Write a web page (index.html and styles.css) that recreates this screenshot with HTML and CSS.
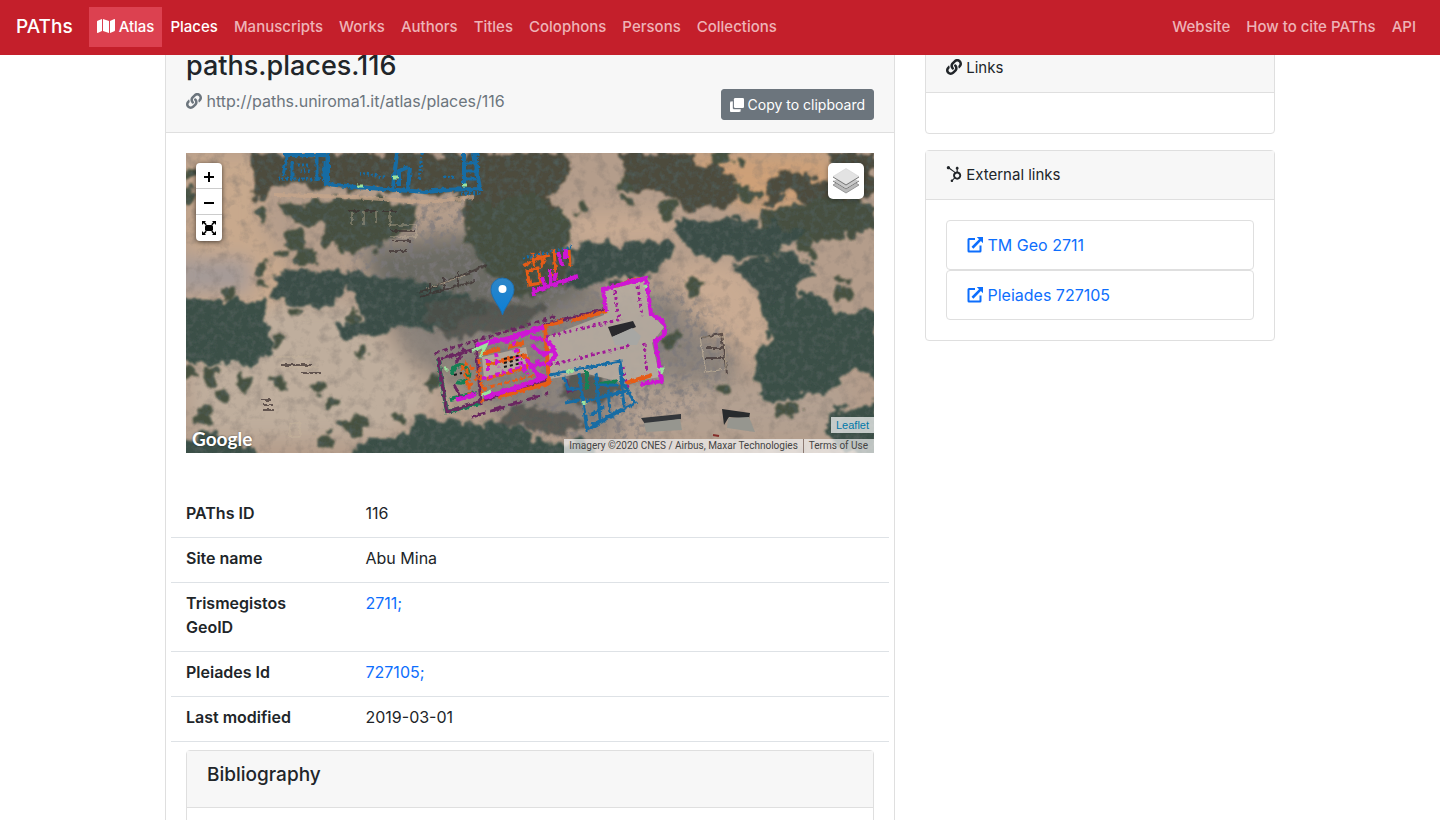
FILE: index.html
```html
<!DOCTYPE html>
<html lang="en">
<head>
<meta charset="utf-8">
<meta name="viewport" content="width=device-width, initial-scale=1">
<title>paths.places.116</title>
<link rel="stylesheet" href="styles.css">
</head>
<body>
<svg class="sprite" aria-hidden="true">
  <symbol id="i-link" viewBox="0 0 512 512"><path d="M326.612 185.391c59.747 59.809 58.927 155.698.36 214.59-.11.12-.24.25-.36.37l-67.2 67.2c-59.27 59.27-155.699 59.262-214.96 0-59.27-59.26-59.27-155.7 0-214.96l37.106-37.106c9.84-9.84 26.786-3.3 27.294 10.606.648 17.722 3.826 35.527 9.69 52.721 1.986 5.822.567 12.262-3.783 16.612l-13.087 13.087c-28.026 28.026-28.905 73.66-1.155 101.96 28.024 28.579 74.086 28.749 102.325.51l67.2-67.19c28.191-28.191 28.073-73.757 0-101.83-3.701-3.694-7.429-6.564-10.341-8.569a16.037 16.037 0 0 1-6.947-12.606c-.396-10.567 3.348-21.456 11.698-29.806l21.054-21.055c5.521-5.521 14.182-6.199 20.584-1.731a152.482 152.482 0 0 1 20.522 17.197zM467.547 44.449c-59.261-59.262-155.69-59.27-214.96 0l-67.2 67.2c-.12.12-.25.25-.36.37-58.566 58.892-59.387 154.781.36 214.59a152.454 152.454 0 0 0 20.521 17.196c6.402 4.468 15.064 3.789 20.584-1.731l21.054-21.055c8.35-8.35 12.094-19.239 11.698-29.806a16.037 16.037 0 0 0-6.947-12.606c-2.912-2.005-6.64-4.875-10.341-8.569-28.073-28.073-28.191-73.639 0-101.83l67.2-67.19c28.239-28.239 74.3-28.069 102.325.51 27.75 28.3 26.872 73.934-1.155 101.96l-13.087 13.087c-4.35 4.35-5.769 10.79-3.783 16.612 5.864 17.194 9.042 34.999 9.69 52.721.509 13.906 17.454 20.446 27.294 10.606l37.106-37.106c59.271-59.259 59.271-155.699.001-214.959z"/></symbol>
  <symbol id="i-map" viewBox="0 0 576 512"><path d="M0 117.66v346.32c0 11.32 11.43 19.06 21.94 14.86L160 416V32L20.12 87.95A32.006 32.006 0 0 0 0 117.66zM192 416l192 64V96L192 32v384zM554.06 33.16L416 96v384l139.88-55.95A31.996 31.996 0 0 0 576 394.34V48.02c0-11.32-11.43-19.06-21.94-14.86z"/></symbol>
  <symbol id="i-clone" viewBox="0 0 512 512"><path opacity=".55" d="M48 108h60v260q0 36 36 36h260v60q0 48-48 48H48q-48 0-48-48V156q0-48 48-48z"/><path d="M48 144h48v224q0 48 48 48h224v48q0 48-48 48H48q-48 0-48-48V192q0-48 48-48z"/><rect x="144" width="368" height="368" rx="48"/></symbol>
  <symbol id="i-hub" viewBox="0 0 512 512"><path d="M267.4 211.6c-25.1 23.7-40.8 57.3-40.8 94.6 0 29.3 9.7 56.3 26 78L203.1 434c-4.4-1.6-9.1-2.5-14-2.5-10.8 0-20.9 4.2-28.5 11.8-7.6 7.6-11.8 17.8-11.8 28.6s4.2 20.9 11.8 28.5c7.6 7.6 17.8 11.6 28.5 11.6 10.8 0 20.9-3.9 28.6-11.6 7.6-7.6 11.8-17.8 11.8-28.5 0-4.2-.6-8.2-1.9-12.1l50-50.2c22 16.9 49.4 26.9 79.3 26.9 71.9 0 130-58.3 130-130.2 0-65.2-47.7-119.2-110.2-128.7V116c17.5-7.4 28.2-23.8 28.2-42.9 0-26.1-20.9-47.9-47-47.9S311.2 47 311.2 73.1c0 19.1 10.7 35.5 28.2 42.900v61.200c-15.200 2.100-29.600 6.700-42.700 13.600-27.600-20.900-117.500-85.700-168.900-124.800 1.200-4.400 2-9 2-13.800C129.800 23.400 106.300 0 77.400 0 48.600 0 25.200 23.400 25.200 52.200c0 28.900 23.400 52.300 52.200 52.300 9.800 0 18.900-2.900 26.800-7.600l163.200 114.700zm89.500 163.600c-38.100 0-69-30.900-69-69s30.900-69 69-69 69 30.900 69 69-30.900 69-69 69z"/></symbol>
  <symbol id="i-ext" viewBox="0 0 16 16"><path d="M8 1.100v2H2.500v10.400h10V8.500h2V14q0 1.500-1.500 1.500H2Q.5 15.500.5 14V2.600q0-1.500 1.500-1.500zM9.800 0H16v6.200l-2.100-2.100-7.500 7.600-1.900-1.900 7.500-7.500z"/></symbol>
</svg>

<header class="navbar">
  <a class="brand" href="#">PAThs</a>
  <nav class="nav nav-main" aria-label="Main">
    <a class="nav-link atlas" href="#"><svg class="icon icon-map" aria-hidden="true"><use href="#i-map"/></svg> Atlas</a>
    <a class="nav-link active" href="#">Places</a>
    <a class="nav-link" href="#">Manuscripts</a>
    <a class="nav-link" href="#">Works</a>
    <a class="nav-link" href="#">Authors</a>
    <a class="nav-link" href="#">Titles</a>
    <a class="nav-link" href="#">Colophons</a>
    <a class="nav-link" href="#">Persons</a>
    <a class="nav-link" href="#">Collections</a>
  </nav>
  <nav class="nav" aria-label="About">
    <a class="nav-link" href="#">Website</a>
    <a class="nav-link" href="#">How to cite PAThs</a>
    <a class="nav-link" href="#">API</a>
  </nav>
</header>

<main class="container">
  <article class="col-main">
    <section class="card">
      <div class="card-header">
        <h1 class="title">paths.places.116</h1>
        <div class="uri-row">
          <span class="uri"><svg class="icon" aria-hidden="true"><use href="#i-link"/></svg> http://paths.uniroma1.it/atlas/places/116</span>
          <button class="copy" type="button"><svg class="icon icon-clone" aria-hidden="true"><use href="#i-clone"/></svg> Copy to clipboard</button>
        </div>
      </div>
      <div class="card-body">
        <div class="map">
          <svg class="imagery" viewBox="0 0 688 300" preserveAspectRatio="xMidYMid slice" role="img" aria-label="Satellite view of Abu Mina">
            <defs>
              <filter id="rough" x="-5%" y="-5%" width="110%" height="110%">
                <feTurbulence type="fractalNoise" baseFrequency=".07" numOctaves="3" seed="4" result="n"/>
                <feDisplacementMap in="SourceGraphic" in2="n" scale="22" xChannelSelector="R" yChannelSelector="G"/>
                <feGaussianBlur stdDeviation=".8" result="shape"/>
                <feTurbulence type="fractalNoise" baseFrequency=".16" numOctaves="3" seed="12"/>
                <feColorMatrix values="0 0 0 0 .08  0 0 0 0 .11  0 0 0 0 .1  2 0 0 0 -.85"/>
                <feComposite in2="shape" operator="in" result="dark"/>
                <feMerge><feMergeNode in="shape"/><feMergeNode in="dark"/></feMerge>
              </filter>
              <filter id="jag" x="-5%" y="-5%" width="110%" height="110%"><feTurbulence type="fractalNoise" baseFrequency=".25" numOctaves="2" seed="9" result="n"/><feDisplacementMap in="SourceGraphic" in2="n" scale="4" xChannelSelector="R" yChannelSelector="G"/></filter>
              <filter id="haze" x="-20%" y="-20%" width="140%" height="140%"><feGaussianBlur stdDeviation="10"/></filter>
              <filter id="grain" x="0" y="0" width="100%" height="100%"><feTurbulence type="fractalNoise" baseFrequency=".09" numOctaves="5" seed="12"/><feColorMatrix values="0 0 0 0 .2  0 0 0 0 .17  0 0 0 0 .15  1.600 0 0 0 -.75"/></filter>
              <filter id="rubble" x="-5%" y="-5%" width="110%" height="110%"><feTurbulence type="fractalNoise" baseFrequency=".14" numOctaves="4" seed="22"/><feColorMatrix values="0 0 0 0 .2  0 0 0 0 .19  0 0 0 0 .2  4 0 0 0 -1.900" result="r"/><feGaussianBlur in="SourceGraphic" stdDeviation="9" result="m"/><feComposite in="r" in2="m" operator="in"/></filter>
              <linearGradient id="pin" x1="0" y1="0" x2="0" y2="1"><stop offset="0" stop-color="#2e86c8"/><stop offset="1" stop-color="#0a7fd6"/></linearGradient>
            </defs>
            <rect width="688" height="300" fill="#b49d8b"/>
            <g filter="url(#haze)">
              <path fill="#c8a98d" d="M0 0h75v75l40 55-30 30H0z"/>
              <path fill="#cda078" d="M485 0h165v60H560l-40-30z"/>
              <path fill="#a39a98" d="M-10 105h75v35h-75z"/>
              <path fill="#8b837c" d="M170 85l160-10 100 70 110-10 10 90-130 60-100-20-100-60z"/>
              <path fill="#6b6b64" d="M180 100l130-20 100 50-60 40-150-10z"/>
              <path fill="#bfae9d" d="M85 150h80l90 100-60 35H10l-10-60z"/>
              <path fill="#c9ab93" d="M380 60h110v30H385zM480 110h70l45 55-20 50-70-50z"/>
              <path fill="#b3a091" d="M430 230h240l-20 55H430z"/>
            </g>
            <rect width="688" height="300" filter="url(#grain)" opacity=".6"/>
            <g filter="url(#rubble)" opacity=".7"><path d="M170 60l120-20 30 60 90 30 90 0 50 60-20 50-90 60-110-20-70-100-90-50z"/></g>
            <g filter="url(#rough)">
              <path fill="#4d4c3c" d="M66 0h315l3 25-20 22 20 14v25l-50 20-45-12-12-40 8-12-100-5-90-6-20 14-10-5zM435 0h75l2 14 20-6 22 22-3 20-55 8-18-18-40-8zM640 0h48v40l-55 12-30-12-20 14-2-32 25-6 20 12 20 2 5-12z"/>
              <path fill="#47503f" d="M95 52l65-8 68 5 7 18-30 14-14 14-22 4-32-10-2-16-30-4zM285 54l60-14 40 30-5 60-50 16-30-30-18-30zM575 60l55-14 58 2v32l-45 8-40-4-20 24z"/>
              <path fill="#3b4e46" d="M490 66l90 4 38 12-20 16-28 8-60-2-14-18zM552 112l50-14 34 22-28 10-4 24-26-4-12-22zM385 92l98-2 6 15-28 18-80 14zM82 145l12-30 30 6 40-6-4 24-26 16zM158 120l60 5 70 20 20 12-50 20-50-5-52 15-8-12 30-10z"/>
              <path fill="#3a5046" d="M-5 148h80l13 55-30 10-50-2-15-8zM575 150l50-10 35 22 33-4v68l-24-10-30 22-50 12-18-8-2-40 18-14zM160 305l25-20 18 4 30-22 90 4 40 20 35-5 10 20zM638 262l55-14v57l-42-10zM-5 288l30-8 20 8 25 12v5H-5z"/>
              <path fill="#50504a" opacity=".8" d="M240 150l40-5 80 10-20 20-70 10-30-15zM385 215l50 20-20 15-40-5zM330 250l70 20-30 10-60-10z"/>
              <g fill="#47513f">
                <circle cx="73" cy="62" r="6"/><circle cx="78" cy="115" r="6"/><circle cx="44" cy="141" r="6"/><circle cx="74" cy="132" r="4"/><circle cx="110" cy="87" r="11"/><circle cx="120" cy="104" r="10"/><circle cx="155" cy="98" r="5"/><circle cx="98" cy="101" r="5"/><circle cx="177" cy="202" r="7"/><circle cx="166" cy="162" r="7"/><circle cx="109" cy="158" r="5"/><circle cx="92" cy="188" r="6"/><circle cx="58" cy="230" r="9"/><circle cx="26" cy="222" r="8"/><circle cx="36" cy="243" r="7"/><circle cx="19" cy="262" r="9"/><circle cx="3" cy="219" r="6"/><circle cx="93" cy="229" r="6"/><circle cx="134" cy="234" r="6"/><circle cx="145" cy="251" r="7"/><circle cx="160" cy="271" r="8"/><circle cx="170" cy="272" r="11"/><circle cx="138" cy="289" r="8"/><circle cx="210" cy="265" r="5"/><circle cx="248" cy="229" r="7"/><circle cx="440" cy="34" r="6"/><circle cx="396" cy="54" r="8"/><circle cx="377" cy="64" r="7"/><circle cx="439" cy="50" r="6"/><circle cx="480" cy="55" r="8"/><circle cx="556" cy="11" r="5"/><circle cx="560" cy="41" r="8"/><circle cx="572" cy="39" r="5"/><circle cx="537" cy="3" r="9"/><circle cx="619" cy="91" r="8"/><circle cx="625" cy="102" r="6"/><circle cx="655" cy="126" r="5"/><circle cx="657" cy="141" r="6"/><circle cx="507" cy="133" r="8"/><circle cx="604" cy="258" r="9"/><circle cx="486" cy="188" r="8"/><circle cx="535" cy="237" r="6"/><circle cx="5" cy="22" r="6"/><circle cx="2" cy="45" r="6"/>
              </g>
            </g>
            <g filter="url(#jag)" fill="none">
              <path stroke="#c9a78a" stroke-width="4" opacity=".7" d="M88 42l80 2 70 5 50-5"/>
              <g stroke="#3b312e" stroke-width="2" opacity=".7"><path d="M162 58h12m4 0h12m6 0h14M205 78h24m-24 10h20m-22 10h18M232 140l45-18 24-10M234 144l55-16M244 130v12m14-18v14m14-20v14M515 185l20-4 6 40M520 195h18m-18 10h18M95 212h30m-10 8h20M76 247h10m-9 5h10m-10 5h10"/></g>
              <path stroke="#c8b69d" opacity=".7" d="M204 72h26v12h-26M514 184h24l2 32-20 3zM166 60v12m12-14v14m12-14v12m14-12v14M240 136l40-14M90 204h35m-30 10h38M104 270h10v14h-10z"/>
            </g>
            <path fill="#b9aea2" opacity=".85" d="M361 184l57-22 1-26 40-10 5 34 14 14-12 16 8 34-36 6-40-10-34 6zM296 204l44-10 4 20-46 12z"/>
            <path fill="#29292d" d="M422 174l25-6 3 6-24 10z"/><path fill="#a7a7a4" d="M426 184l20-9 9 8-4 9h-22z"/>
            <path fill="#33363a" d="M455 265l40-4v5l-36 5z"/><path fill="#282b2d" d="M536 256l28 4-1 6-20-2-5 8z"/><path fill="#96968f" d="M458 270l36-4 2 11-36 2zM542 265l21-1 6 15-28-4z"/><path stroke="#842d2a" stroke-width="2" d="M527 282l6 1"/>
            <g filter="url(#jag)" fill="none">
              <g stroke="#158054" stroke-width="4"><path d="M252 206l9 53 33-9M264 246l26-6M266 222q0-9 8-10 10 2 8 12-4 8-12 5"/><path d="M401 218v18m8-4 23-4"/></g>
              <g stroke="#6b2861" stroke-width="3"><path stroke-dasharray="5 3" d="M249 200l122-37"/><path d="M252 205l9 54 101-32M290 190l5 62M255 206l34-10M268 232l8 14M278 196l-8 14M380 226l2 12 10-2M357 172l64-16"/><path stroke-dasharray="14 5" d="M286 264l77-24"/></g>
              <g stroke="#e65b17" stroke-width="4">
                <path stroke-width="3" d="M341 118l3 14 11-2-3-15zM337 113l8-4m1-9 2 10 6-9 2 10 6-12M350 106l14-4M368 96l2 28-5-4M383 97l1 16"/>
                <path d="M357 174l20-6m8 0 36-10M429 133l25-7M359 172l4 58-50 14M294 201l20-5m8-2 16-4M300 212l38-10q8 4 3 12l-40 12M440 230l26-8"/>
                <path stroke-width="3" stroke-dasharray="5 3" d="M276 212l6 22 12-12-14-12 4 32M293 206l4 44M296 236l60-16M330 196l18 20"/>
              </g>
              <g stroke="#ce14d4" stroke-width="4">
                <path d="M346 139l46-16M359 134l-3-10m12 4 2-9M372 99l4 13M380 96v10m-16 10v18M347 135l1 8"/>
                <path stroke-width="5" d="M290 193l22-6 6 0 40-13M298 244l28-8 34-12"/>
                <path d="M338 180l20-5M344 184l14 3M346 192l12 10 10-6-8-10M342 214l18-4M348 220l12 4M366 196l4 6-8 10M340 206l14 18M270 247l20-6"/>
                <path stroke-dasharray="4 3" d="M326 182l6 24 10 16M334 180l-14 10M302 206v12m8-18 3 14M296 226l60-18"/>
                <path d="M420 158l-3-22 43-11 5 36c16 6 20 20 4 27l7 40-22 3"/>
              </g>
              <g stroke="#a01f97" stroke-width="3" stroke-dasharray="3 3"><path d="M360 184l76-18M364 212l80-19M429 138l4 30M452 133l4 30M458 190l3 30M437 214l4 20"/></g>
              <g stroke="#176ca4" stroke-width="3">
                <path stroke-width="4" d="M98 2h44V28M142 0l-2 31 30 3 70 5 24-2M211 0l-4 34M278 0v37M288 0l6 36-48 1M224 14l-2 22m0-22-9 4v15"/>
                <path d="M101 4l-4 18m9-14v18M131 4v24m7-20v20M280 10h10m-10 8h10m-10 8h10"/>
                <path stroke-dasharray="2 2" d="M236 0l-3 26m-60-6 25 4M112 12h12m-10 6h10M92 26h45M291 0l2 40-20 1M258 24h12M337 105l48-11"/>
                <path d="M364 222l70-14 3 22 12 20-48 27-8-57M378 224l4 12h12M379 250l14-3M410 220l4 46M434 214l4 40M400 248l40-10M422 236l2 24M404 262l14-8M412 232h20M406 272l30-16"/>
              </g>
              <g stroke="#9be39d" stroke-width="3"><path d="M171 33h6m30-9h5m64 8h5M286 198l14-6-6 12M258 214l4 4m34 24 10-4M380 219l8-2M471 216h5v5M459 132l2 3M398 248v4"/></g>
            </g>
            <path fill="none" stroke="#17171a" stroke-width="2" stroke-dasharray="3 3" d="M318 206l18-4m-18 8 18-4m-18 8 18-4M268 222l8-2"/>
            <path fill="url(#pin)" stroke="#1f6fae" d="M316.500 162c-2-8-11.500-17-11.500-25.500a11.500 11.500 0 0 1 23 0c0 8.500-9.500 17.500-11.500 25.500z"/><circle cx="316.500" cy="136" r="4" fill="#fff"/>
          </svg>
          <div class="zoom">
            <button type="button" aria-label="Zoom in"><svg viewBox="0 0 26 26"><path d="M8 14h10m-5-5v10" stroke="#000" stroke-width="2"/></svg></button>
            <button type="button" aria-label="Zoom out"><svg viewBox="0 0 26 26"><path d="M8 14h10" stroke="#000" stroke-width="2"/></svg></button>
            <button type="button" aria-label="Full screen"><svg viewBox="0 0 26 26"><rect x="9" y="10" width="8" height="6" rx="1.500"/><path d="M6 6h4L8.800 7.200l2 2-1.200 1-2-2L6 10zM20 6h-4l1.200 1.200-2 2 1.200 1 2-2L20 10zM6 20h4l-1.200-1.200 2-2-1.200-1-2 2L6 16zM20 20h-4l1.200-1.200-2-2 1.200-1 2 2L20 16z"/></svg></button>
          </div>
          <button class="layers" type="button" aria-label="Layers"><svg viewBox="0 0 26 26"><path fill="#b9b9b9" stroke="#888" stroke-width=".8" d="M0 17l13 8 13-8-3-2H3z"/><path fill="#c9c9c9" stroke="#fff" stroke-width=".8" d="M0 13l13 8 13-8-3-2H3z"/><path fill="none" stroke="#777" d="M0 13l13 8 13-8"/><path fill="#e3e3e3" stroke="#d4d4d4" stroke-width=".6" d="M0 8.500L13 .5l13 8-13 8z"/><path fill="none" stroke="#777" d="M0 9l13 8 13-8"/></svg></button>
          <span class="google">Google</span>
          <div class="credits">
            <a class="leaflet" href="#">Leaflet</a>
            <div class="terms"><span>Imagery ©2020 CNES / Airbus, Maxar Technologies</span><a href="#">Terms of Use</a></div>
          </div>
        </div>
        <table class="facts">
          <tr><th scope="row">PAThs ID</th><td>116</td></tr>
          <tr><th scope="row">Site name</th><td>Abu Mina</td></tr>
          <tr><th scope="row">Trismegistos GeoID</th><td><a href="#">2711;</a></td></tr>
          <tr><th scope="row">Pleiades Id</th><td><a href="#">727105;</a></td></tr>
          <tr><th scope="row">Last modified</th><td>2019-03-01</td></tr>
        </table>
        <section class="card">
          <div class="card-header"><h2 class="subtitle">Bibliography</h2></div>
          <div class="card-body"></div>
        </section>
      </div>
    </section>
  </article>
  <aside class="col-side">
    <section class="card">
      <div class="card-header"><svg class="icon" aria-hidden="true"><use href="#i-link"/></svg> Links</div>
      <div class="card-body"></div>
    </section>
    <section class="card">
      <div class="card-header"><svg class="icon" aria-hidden="true"><use href="#i-hub"/></svg> External links</div>
      <div class="card-body">
        <a class="ext" href="#"><svg class="icon" aria-hidden="true"><use href="#i-ext"/></svg> TM Geo 2711</a>
        <a class="ext" href="#"><svg class="icon" aria-hidden="true"><use href="#i-ext"/></svg> Pleiades 727105</a>
      </div>
    </section>
  </aside>
</main>
</body>
</html>
```
FILE: styles.css
```css
* { box-sizing: border-box; }
body {
  margin: 0;
  font: 16px/24px Inter, "Liberation Sans", sans-serif;
  color: #212529;
  background: #fff;
}
a { color: #0d6efd; text-decoration: none; }
h1, h2 { margin: 0 0 8px; font-weight: 500; }
.sprite { position: absolute; width: 0; height: 0; }
.icon { width: 16px; height: 16px; vertical-align: -2px; fill: currentColor; }
.icon-map { width: 18px; }
.icon-clone { width: 14px; height: 14px; }

.navbar {
  position: sticky;
  top: 0;
  z-index: 10;
  display: flex;
  align-items: center;
  gap: 16px;
  min-height: 55px;
  padding: 7px 16px 8px;
  background: #c41f2b;
}
.brand { font-size: 19px; font-weight: 500; color: #fff; }
.nav { display: flex; font-size: 15px; font-weight: 500; }
.nav-main { flex: 1; }
.nav-link { padding: 8px; color: #eeb3b7; white-space: nowrap; }
.nav-link.active, .nav-link.atlas { color: #fff; }
.nav-link.atlas { background: #dc4150; }

.container {
  display: flex;
  max-width: 1140px;
  margin: -21px auto 0;
}
.col-main { flex: 0 0 66.6667%; min-width: 0; padding: 0 15px; }
.col-side { flex: 1; min-width: 0; padding: 9px 15px 0; }

.card {
  margin-bottom: 16px;
  border: 1px solid #dfdfdf;
  border-radius: 4px;
  background: #fff;
}
.card-header { padding: 12px 20px; background: #f7f7f7; border-bottom: 1px solid #dfdfdf; }
.card-body { padding: 20px; }
.col-side .card-header { font-size: 15px; }
.title { margin-bottom: 4px; font-size: 27px; line-height: 38px; }
.subtitle { font-size: 19px; line-height: 24px; }
.uri-row { display: flex; justify-content: space-between; align-items: flex-start; }
.uri { color: #6c757d; }
.copy {
  padding: 4px 8px;
  border: 1px solid #6c757d;
  border-radius: 3px;
  background: #6c757d;
  color: #fff;
  font: 14px/21px Inter, "Liberation Sans", sans-serif;
}

.map { position: relative; height: 300px; margin-bottom: 40px; overflow: hidden; }
.imagery { display: block; width: 100%; height: 100%; }
.zoom {
  position: absolute;
  top: 10px;
  left: 10px;
  width: 26px;
  border-radius: 4px;
  background: #fff;
  box-shadow: 0 1px 5px rgba(0, 0, 0, .65);
}
.zoom button { display: block; width: 26px; height: 26px; padding: 0; border: 0; border-bottom: 1px solid #ccc; background: none; }
.zoom button:last-child { border-bottom: 0; }
.zoom svg { display: block; width: 26px; height: 26px; }
.layers {
  position: absolute;
  top: 10px;
  right: 10px;
  width: 36px;
  height: 36px;
  padding: 5px;
  border: 0;
  border-radius: 5px;
  background: #fff;
  box-shadow: 0 1px 5px rgba(0, 0, 0, .4);
}
.layers svg { display: block; width: 26px; height: 26px; }
.google {
  position: absolute;
  left: 6px;
  bottom: 2px;
  color: #fff;
  font: 700 19px/24px Lato, sans-serif;
  text-shadow: 0 0 2px rgba(0, 0, 0, .5);
}
.credits { position: absolute; right: 0; bottom: 0; display: flex; flex-direction: column; align-items: flex-end; gap: 6px; }
.leaflet { padding: 0 5px; background: rgba(255, 255, 255, .7); color: #0078a8; font: 11px/16px "Liberation Sans", sans-serif; }
.terms { display: flex; background: rgba(245, 245, 245, .7); font: 10px/14px Roboto, sans-serif; }
.terms > * { padding: 0 5px; color: #444; }
.terms > a { padding-right: 6px; border-left: 1px solid #8d7b74; }

.facts { width: calc(100% + 30px); margin: 0 -15px 8px; border-collapse: separate; border-spacing: 0; table-layout: fixed; }
.facts th, .facts td { padding: 8px 15px 12px; border-bottom: 1px solid #dee2e6; text-align: left; vertical-align: top; }
.facts th { width: 25%; font-weight: 600; }

.ext { display: block; padding: 12px 20px; border: 1px solid #dfdfdf; border-radius: 4px; }
```
